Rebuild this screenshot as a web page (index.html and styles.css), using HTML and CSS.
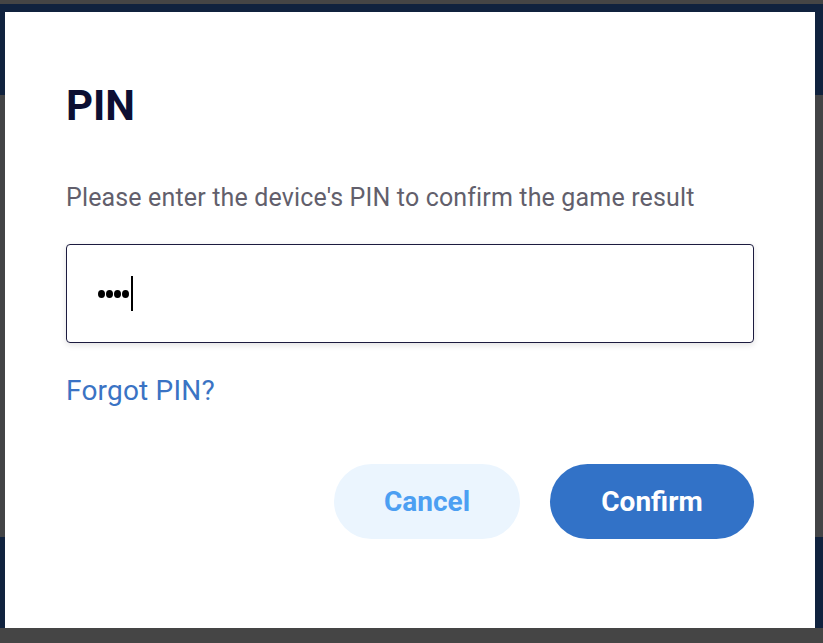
FILE: index.html
```html
<!DOCTYPE html>
<html lang="en">
<head>
  <meta charset="UTF-8">
  <meta name="viewport" content="width=device-width, initial-scale=1.0">
  <title>PIN</title>
  <link rel="stylesheet" href="styles.css">
</head>
<body>
  <div class="page">
    <div class="page-header"></div>
    <div class="page-main"></div>
    <div class="page-footer"></div>
  </div>

  <div class="modal">
    <h2 class="modal-title">PIN</h2>
    <p class="modal-text">Please enter the device's PIN to confirm the game result</p>
    <div class="pin-field">
      <span class="pin-dot"></span><span class="pin-dot"></span><span class="pin-dot"></span><span class="pin-dot"></span><span class="caret"></span>
    </div>
    <a href="#" class="forgot-link">Forgot PIN?</a>
    <div class="modal-actions">
      <button class="btn btn-cancel">Cancel</button>
      <button class="btn btn-confirm">Confirm</button>
    </div>
  </div>
</body>
</html>
```

FILE: styles.css
```css
body {
  margin: 0;
  height: 643px;
  overflow: hidden;
  background-color: #454545;
  font-family: Roboto, "Liberation Sans", sans-serif;
}
.page {
  display: flex;
  flex-direction: column;
  height: 624px;
  padding-top: 4px;
}
.page-header {
  height: 91px;
  background-color: #10223e;
}
.page-main {
  flex: 1;
  background-color: #434446;
}
.page-footer {
  height: 91px;
  background-color: #10223e;
}
.modal {
  position: absolute;
  left: 5px;
  top: 12px;
  width: 810px;
  height: 616px;
  box-sizing: border-box;
  padding: 72px 61px 0;
  background-color: white;
  display: flex;
  flex-direction: column;
  align-items: flex-start;
}
.modal-title {
  margin: 0;
  font-size: 42px;
  line-height: 44px;
  font-weight: 700;
  color: #0c0f33;
}
.modal-text {
  margin: 54px 0 0;
  font-size: 25px;
  line-height: 32px;
  letter-spacing: 0.15px;
  color: #625f6c;
}
.pin-field {
  align-self: stretch;
  margin-top: 30px;
  height: 99px;
  box-sizing: border-box;
  border: 1px solid #1c1b3f;
  border-radius: 4px;
  box-shadow: 0 2px 6px rgba(0, 0, 0, 0.12);
  padding-left: 31px;
  display: flex;
  align-items: center;
  gap: 1px;
}
.pin-dot {
  width: 7px;
  height: 8px;
  border-radius: 50%;
  background-color: black;
}
.caret {
  width: 2px;
  height: 35px;
  margin-left: 1px;
  background-color: black;
}
.forgot-link {
  margin-top: 30px;
  font-size: 28px;
  line-height: 36px;
  letter-spacing: 0.2px;
  color: #3a73c4;
  text-decoration: none;
}
.modal-actions {
  align-self: stretch;
  margin-top: 55px;
  display: flex;
  justify-content: flex-end;
  gap: 30px;
}
.btn {
  height: 75px;
  border: none;
  border-radius: 38px;
  font-family: Roboto, "Liberation Sans", sans-serif;
  font-size: 28px;
  font-weight: 700;
  cursor: pointer;
}
.btn-cancel {
  width: 186px;
  background-color: #ebf5fe;
  color: #4c9ff2;
}
.btn-confirm {
  width: 204px;
  background-color: #3272c7;
  color: white;
}
```
